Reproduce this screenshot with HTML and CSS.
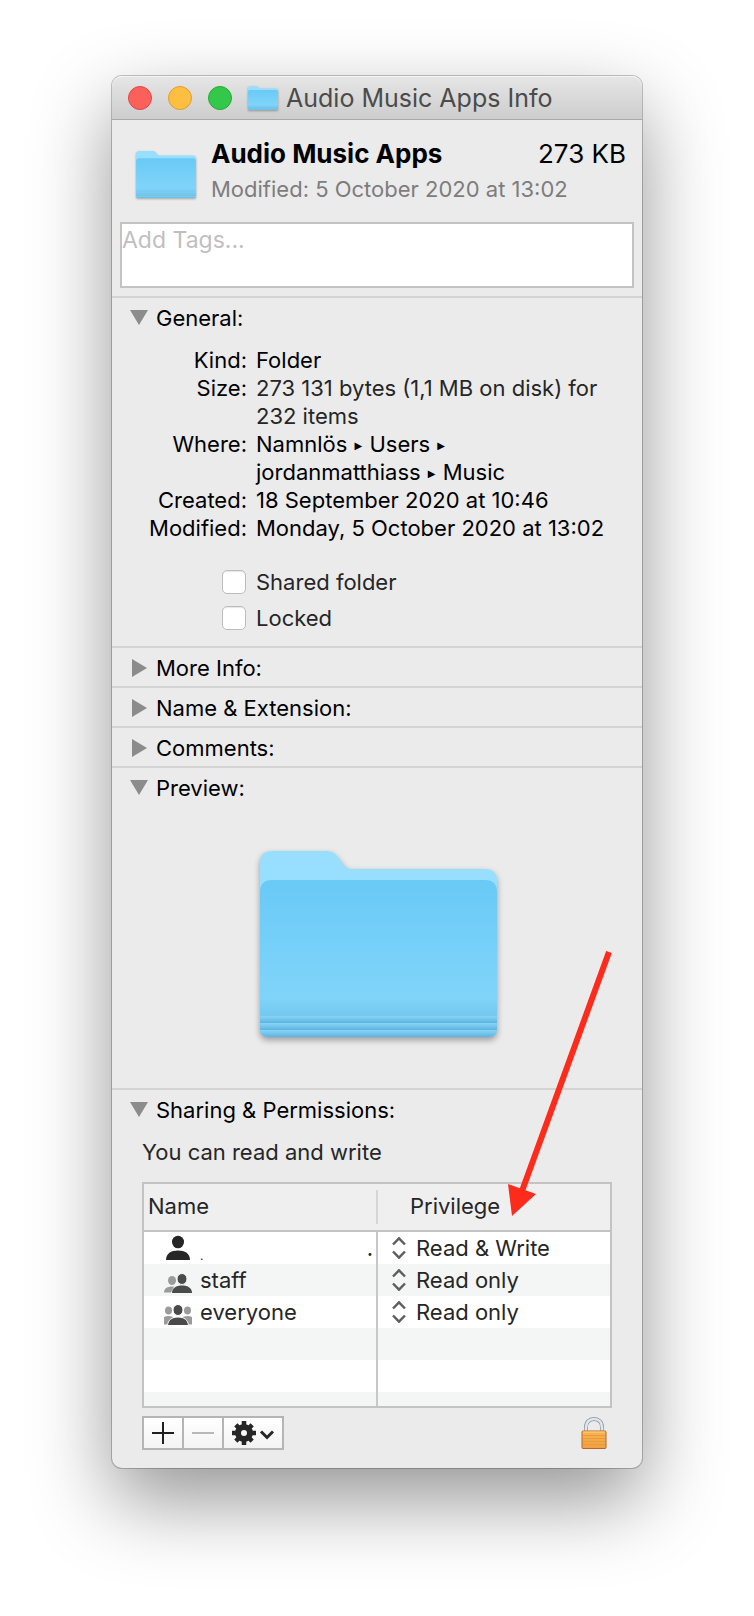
FILE: index.html
```html
<!DOCTYPE html>
<html lang="en">
<head>
  <meta charset="UTF-8" />
  <meta name="viewport" content="width=device-width, initial-scale=1.0"/>
  <title>Audio Music Apps Info</title>
  <link rel="stylesheet" href="styles.css">
</head>
<body>
  <!-- shared icons -->
  <svg class="defs" width="0" height="0" aria-hidden="true">
    <defs>
      <linearGradient id="folderFront" x1="0" y1="0" x2="0" y2="1">
        <stop offset="0" stop-color="#69caf6"/>
        <stop offset="0.75" stop-color="#80d4fa"/>
        <stop offset="0.86" stop-color="#75c9f0"/>
        <stop offset="1" stop-color="#75c9f0"/>
      </linearGradient>
      <linearGradient id="folderStripe" x1="0" y1="0" x2="0" y2="1">
        <stop offset="0" stop-color="#8ad4f4"/>
        <stop offset="1" stop-color="#5bb5e2"/>
      </linearGradient>
      <linearGradient id="lockBody" x1="0" y1="0" x2="0" y2="1">
        <stop offset="0" stop-color="#fbb54f"/>
        <stop offset="1" stop-color="#f0a040"/>
      </linearGradient>
      <symbol id="folder" viewBox="0 0 237 186">
        <path fill="#98deff" d="M0 12Q0 0 12 0H67Q74 0 78 6L84 14Q87 18 92 18H225Q237 18 237 30V175Q237 186 228 186H9Q0 186 0 175Z"/>
        <path fill="url(#folderFront)" d="M0 41Q0 29 12 29H225Q237 29 237 41V177Q237 186 228 186H9Q0 186 0 177Z"/>
        <path fill="url(#folderStripe)" d="M0 165H237V172H0Z"/>
        <path fill="url(#folderStripe)" d="M0 172H237V179H0Z"/>
        <path fill="url(#folderStripe)" d="M0 179H237Q236 186 229 186H8Q1 186 0 179Z"/>
      </symbol>
      <symbol id="updown" viewBox="0 0 14 22">
        <path d="M1 7.500L7 1.300L13 7.500M1 14.500L7 20.700L13 14.500" fill="none" stroke="#5e5e5e" stroke-width="2.400"/>
      </symbol>
    </defs>
  </svg>

  <main class="window">
    <header class="titlebar">
      <button class="light close" aria-label="Close"></button>
      <button class="light minimize" aria-label="Minimize"></button>
      <button class="light zoom" aria-label="Zoom"></button>
      <svg class="folder folder-small"><use href="#folder"/></svg>
      <h1>Audio Music Apps Info</h1>
    </header>

    <div class="summary-box">
      <svg class="folder folder-medium"><use href="#folder"/></svg>
      <div class="summary-text">
        <div class="name-row"><strong>Audio Music Apps</strong><span>273 KB</span></div>
        <p>Modified: 5 October 2020 at 13:02</p>
      </div>
    </div>
    <textarea class="tags" placeholder="Add Tags..." aria-label="Tags"></textarea>

    <details open>
      <summary>General:</summary>
      <dl class="info">
        <dt>Kind:</dt><dd>Folder</dd>
        <dt>Size:</dt><dd class="soft">273 131 bytes (1,1 MB on disk) for<br>232 items</dd>
        <dt>Where:</dt><dd>Namnlös <span class="sep">▶</span> Users <span class="sep">▶</span><br>jordanmatthiass <span class="sep">▶</span> Music</dd>
        <dt>Created:</dt><dd>18 September 2020 at 10:46</dd>
        <dt>Modified:</dt><dd>Monday, 5 October 2020 at 13:02</dd>
      </dl>
      <div class="checks">
        <label><input type="checkbox"> Shared folder</label>
        <label><input type="checkbox"> Locked</label>
      </div>
    </details>

    <details><summary>More Info:</summary></details>
    <details><summary>Name &amp; Extension:</summary></details>
    <details><summary>Comments:</summary></details>

    <details open>
      <summary>Preview:</summary>
      <div class="preview">
        <svg class="folder folder-large"><use href="#folder"/></svg>
      </div>
    </details>

    <details open>
      <summary>Sharing &amp; Permissions:</summary>
      <div class="sharing">
        <p>You can read and write</p>
        <div class="table-box">
          <table>
            <thead>
              <tr><th>Name</th><th>Privilege</th></tr>
            </thead>
            <tbody>
              <tr>
                <td>
                  <div class="user">
                    <svg width="28" height="28" viewBox="0 0 28 28" fill="#262626">
                      <ellipse cx="14" cy="8" rx="6" ry="6.3"/>
                      <path d="M2 26C2 19.500 7 16.500 14 16.500S26 19.500 26 26Z"/>
                    </svg>
                    <span class="dot">.</span><span class="end">.</span>
                  </div>
                </td>
                <td>
                  <div class="privilege">
                    <svg width="14" height="22"><use href="#updown"/></svg>
                    <select aria-label="Privilege"><option>Read &amp; Write</option><option>Read only</option></select>
                  </div>
                </td>
              </tr>
              <tr>
                <td>
                  <div class="user">
                    <svg width="28" height="28" viewBox="0 0 28 28">
                      <ellipse cx="8" cy="14.500" rx="4" ry="4.500" fill="#9b9b9b"/>
                      <path d="M0 26.500C0 22 4 20 10 20.500L7 26.500Z" fill="#9b9b9b"/>
                      <ellipse cx="18" cy="13" rx="5" ry="5.500" fill="#4a4a4a" stroke="#f4f5f5"/>
                      <path d="M8 27C8 22 12 19.500 18 19.500S28 22 28 27Z" fill="#4a4a4a"/>
                    </svg>
                    <span>staff</span>
                  </div>
                </td>
                <td>
                  <div class="privilege">
                    <svg width="14" height="22"><use href="#updown"/></svg>
                    <select aria-label="Privilege"><option>Read only</option><option>Read &amp; Write</option></select>
                  </div>
                </td>
              </tr>
              <tr>
                <td>
                  <div class="user">
                    <svg width="28" height="28" viewBox="0 0 28 28">
                      <g fill="#9b9b9b">
                        <ellipse cx="4.500" cy="12.500" rx="3.500" ry="4"/>
                        <ellipse cx="23.500" cy="12.500" rx="3.500" ry="4"/>
                        <path d="M0 26.500V19Q4 17 9 19V26.500ZM28 26.500V19Q24 17 19 19V26.500Z"/>
                      </g>
                      <ellipse cx="14" cy="12" rx="5" ry="5.500" fill="#4a4a4a" stroke="#fff"/>
                      <path d="M3.500 27.500C4 22 8 19 14 19S24 22 24.500 27.500Z" fill="#4a4a4a" stroke="#fff"/>
                    </svg>
                    <span>everyone</span>
                  </div>
                </td>
                <td>
                  <div class="privilege">
                    <svg width="14" height="22"><use href="#updown"/></svg>
                    <select aria-label="Privilege"><option>Read only</option><option>Read &amp; Write</option></select>
                  </div>
                </td>
              </tr>
              <tr><td></td><td></td></tr>
              <tr><td></td><td></td></tr>
              <tr class="partial"><td></td><td></td></tr>
            </tbody>
          </table>
        </div>

        <div class="footer">
          <div class="actions">
            <button aria-label="Add">
              <svg width="22" height="22" viewBox="0 0 22 22"><path d="M11 0V22M0 11H22" stroke="#1e1e1e" stroke-width="2"/></svg>
            </button>
            <button aria-label="Remove" disabled>
              <svg width="22" height="22" viewBox="0 0 22 22"><path d="M0 11H22" stroke="#b8b8b8" stroke-width="2"/></svg>
            </button>
            <button class="gear" aria-label="Actions">
              <svg width="42" height="24" viewBox="0 0 42 24">
                <g stroke="#262626" stroke-width="4.500">
                  <path d="M12 0V24M0 12H24M3.800 3.800L20.200 20.200M20.200 3.800L3.800 20.200"/>
                  <circle cx="12" cy="12" r="6" fill="#f8f8f8" stroke-width="6"/>
                </g>
                <path d="M29 10.500L35 16.500L41 10.500" fill="none" stroke="#262626" stroke-width="3"/>
              </svg>
            </button>
          </div>
          <button class="lock" aria-label="Lock">
            <svg width="26" height="32" viewBox="0 0 26 32">
              <path d="M5 15V10.500C5 5 8.500 2 13 2S21 5 21 10.500V15" fill="none" stroke="#8b949c" stroke-width="4"/>
              <path d="M5 15V10.500C5 5 8.500 2 13 2S21 5 21 10.500V15" fill="none" stroke="#dfe8ef" stroke-width="2.600"/>
              <rect x="1" y="14" width="24" height="17.500" rx="1" fill="url(#lockBody)" stroke="#b5652a"/>
              <path d="M2 15H24" stroke="#ffd27e"/>
              <path d="M2 18.500H24M2 21.500H24M2 24.500H24M2 27.500H24" stroke="#e69b3e"/>
            </svg>
          </button>
        </div>
      </div>
    </details>

    <!-- arrow that points at the privilege column -->
    <svg class="arrow" width="106" height="268" viewBox="0 0 106 268" aria-hidden="true">
      <path d="M101 1L14 240" stroke="#fc2b1c" stroke-width="6"/>
      <path d="M0 233L28 243L4 265Z" fill="#fc2b1c"/>
    </svg>
  </main>
</body>
</html>
```
FILE: styles.css
```css
* {
  box-sizing: border-box;
}

body {
  margin: 0;
  padding: 76px 112px 148px;
  background: #fff;
  font-family: Inter, "Liberation Sans", sans-serif;
  font-size: 22px;
  line-height: 28px;
  color: #000;
}

h1, p, dl, dd {
  margin: 0;
}

svg {
  display: block;
  flex: none;
}

button {
  padding: 0;
  border: none;
  background: none;
}

.defs {
  position: absolute;
}

.window {
  position: relative;
  max-width: 720px;
  margin: auto;
  background: #ebebeb;
  border-radius: 10px;
  box-shadow: 0 0 0 1px rgba(0,0,0,0.22), 0 32px 80px rgba(0,0,0,0.42);
}

/* title bar */
.titlebar {
  display: flex;
  align-items: center;
  gap: 16px;
  height: 44px;
  padding-left: 16px;
  border-bottom: 1px solid #a9a9a9;
  border-radius: 10px 10px 0 0;
  background: linear-gradient(#e6e6e6, #cdcdcd);
  box-shadow: inset 0 1px 0 #f4f4f4;
}

.light {
  width: 24px;
  height: 24px;
  border-radius: 50%;
}

.close {
  background: #fc605b;
  border: 1px solid #df4744;
}

.minimize {
  background: #fdbe41;
  border: 1px solid #de9f34;
}

.zoom {
  background: #34c84a;
  border: 1px solid #27aa35;
}

h1 {
  margin-left: -8px;
  font-size: 25px;
  font-weight: 400;
  color: #4b4b4b;
  white-space: nowrap;
}

.folder {
  filter: drop-shadow(0 1px 1px rgba(0,0,0,0.3));
}

.folder-small {
  width: 30px;
  height: 24px;
}

.folder-medium {
  width: 60px;
  height: 47px;
}

.folder-large {
  width: 237px;
  height: 186px;
  filter: drop-shadow(0 3px 3px rgba(0,0,0,0.35));
}

/* name and size */
.summary-box {
  display: flex;
  align-items: flex-end;
  gap: 15px;
  padding: 16px 16px 24px 24px;
}

.summary-text {
  flex: 1;
  margin-bottom: -8px;
}

.name-row {
  display: flex;
  justify-content: space-between;
  font-size: 26px;
  line-height: 36px;
}

.summary-text p {
  line-height: 34px;
  color: #7d7d7d;
}

.tags {
  display: block;
  width: calc(100% - 16px);
  height: 66px;
  margin: 0 8px 8px;
  padding: 0;
  border: 2px solid #c3c3c3;
  background: #fff;
  font: 23px/32px Inter, "Liberation Sans", sans-serif;
  resize: none;
}

.tags::placeholder {
  color: #bfbfbf;
}

/* sections */
details {
  border-top: 2px solid #d3d3d3;
}

summary {
  display: flex;
  align-items: center;
  padding: 2px 0 0 18px;
  line-height: 36px;
  list-style: none;
}

summary::before {
  content: "";
  width: 18px;
  height: 18px;
  margin-right: 8px;
  background: #8c8c8c;
  clip-path: polygon(2px 0, 17px 9px, 2px 18px);
}

details[open] > summary::before {
  clip-path: polygon(0 1px, 18px 1px, 9px 16px);
}

.info {
  display: grid;
  grid-template-columns: 135px 1fr;
  column-gap: 9px;
  padding-top: 10px;
  white-space: nowrap;
}

.info dt {
  text-align: right;
}

.soft {
  color: #262626;
}

.sep {
  margin: 0 1px;
  font-family: "DejaVu Sans", sans-serif;
  font-size: 10px;
  vertical-align: 3px;
  line-height: 1;
}

.checks {
  padding: 22px 0 10px 110px;
}

.checks label {
  display: flex;
  align-items: center;
  gap: 10px;
  height: 36px;
  color: #262626;
}

.checks input {
  appearance: none;
  width: 24px;
  height: 24px;
  margin: 0;
  border: 1px solid #bdbdbd;
  border-radius: 5px;
  background: #fff;
  box-shadow: inset 0 1px 1px rgba(0,0,0,0.1);
}

.preview {
  display: flex;
  justify-content: center;
  padding: 45px 0 51px 3px;
}

/* sharing */
.sharing {
  padding: 10px 30px 18px;
  color: #262626;
}

.table-box {
  margin: 16px 0 8px;
  border: 2px solid #c3c3c3;
  background: #fff;
}

table {
  width: 100%;
  table-layout: fixed;
  border-collapse: separate;
  border-spacing: 0;
}

th, td {
  height: 32px;
  padding: 0;
}

th {
  height: 48px;
  padding: 0 0 2px 4px;
  border-bottom: 2px solid #c3c3c3;
  background: #efefef;
  font-weight: 400;
  text-align: left;
}

th:first-child {
  width: 234px;
  background: linear-gradient(#d5d5d5, #d5d5d5) right center / 2px 34px no-repeat #efefef;
}

th:last-child {
  padding-left: 32px;
}

td:first-child {
  border-right: 2px solid #c8c8c8;
}

tbody tr:nth-child(even) {
  background: #f4f5f5;
}

.partial td {
  height: 14px;
}

.user {
  display: flex;
  gap: 8px;
  height: 32px;
  padding: 2px 3px 0 20px;
}

.dot {
  align-self: flex-end;
  font-size: 12px;
  line-height: 16px;
}

.end {
  margin-left: auto;
}

.privilege {
  display: flex;
  align-items: center;
  gap: 10px;
  height: 32px;
  padding-left: 14px;
}

select {
  appearance: none;
  flex: 1;
  min-width: 0;
  padding: 0;
  border: none;
  background: none;
  font: inherit;
  color: inherit;
}

.footer {
  display: flex;
  justify-content: space-between;
}

.actions {
  display: flex;
  gap: 2px;
  padding: 2px;
  background: #b5b5b5;
}

.actions button {
  display: flex;
  align-items: center;
  justify-content: center;
  width: 38px;
  height: 30px;
  background: linear-gradient(#fff, #f3f3f3);
}

.actions .gear {
  width: 58px;
}

.lock {
  margin-right: 5px;
}

.arrow {
  position: absolute;
  top: 875px;
  right: 28px;
}
```
